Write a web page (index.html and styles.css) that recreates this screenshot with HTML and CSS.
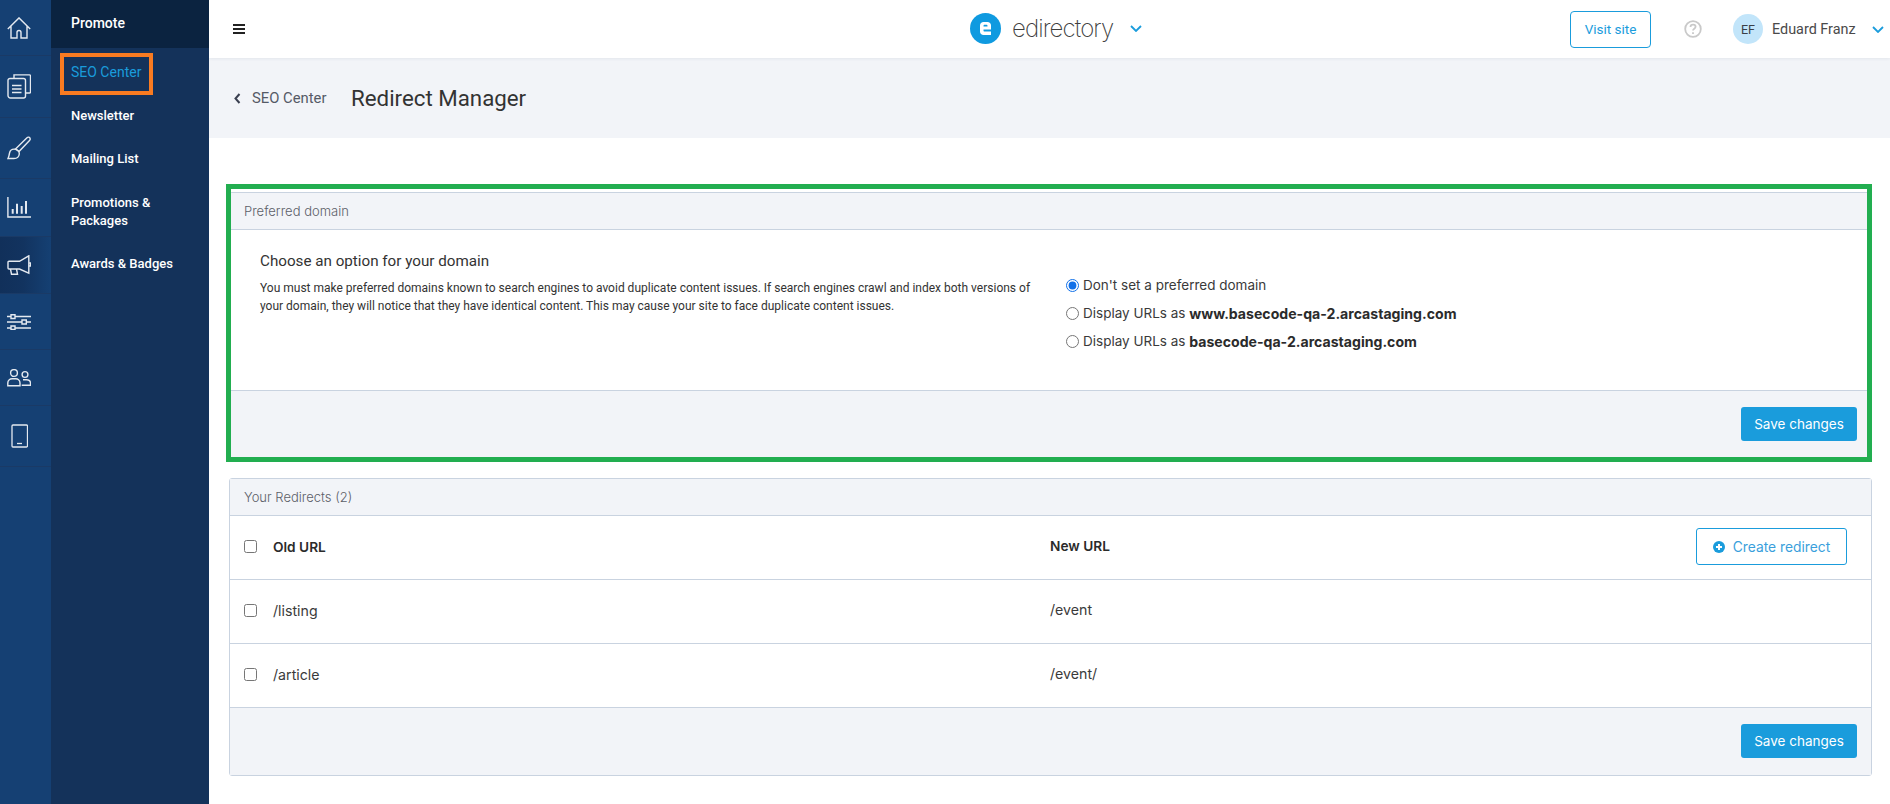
FILE: index.html
```html
<!DOCTYPE html>
<html lang="en">
<head>
<meta charset="utf-8">
<title>Redirect Manager</title>
<link rel="stylesheet" href="styles.css">
</head>
<body>
<div class="app">
  <nav class="rail">
    <a class="rail-item"><svg class="ico" viewBox="0 0 24 22"><path d="M.8 12 12 .9 23.200 12M4 9v12h6v-5.500a2 2 0 0 1 4 0V21h6V9"/></svg></a>
    <a class="rail-item"><svg class="ico" viewBox="0 0 24 25"><path d="M7 4V.9h15.500a1 1 0 0 1 1 1V18a1 1 0 0 1-1 1H19"/><path d="M3 4.500h13.500a2 2 0 0 1 2 2V22a2 2 0 0 1-2 2H3.500a2.500 2.500 0 0 1-2.500-2.500V6.500a2 2 0 0 1 2-2z"/><path class="thin" d="M5 11.500h9.500M5 15h9.500M5 18.500h9.500"/></svg></a>
    <a class="rail-item"><svg class="ico" viewBox="0 0 24 24"><path d="M8.500 13 20 1.700c1-.9 2.300-.6 2.900.3.500.8.300 1.800-.4 2.500L12 15.500z"/><path d="M8 13.200c-3-.3-5 1.200-5.500 4-.3 2-.7 3.800-1.500 5.300h6c3 0 5-2 5.300-4.500.1-2-1.300-4.500-4.300-4.800z"/></svg></a>
    <a class="rail-item"><svg class="ico" viewBox="0 0 24 21"><path d="M.9 0v20h23.100"/><path class="thick" d="M5.700 12v4.800M10 6.700v10.100M14.700 9v7.800M19 4v12.800"/></svg></a>
    <a class="rail-item active"><svg class="ico" viewBox="0 0 24 20"><path d="M2 6.300h10.500L21.800.8v17.400l-9.300-4.200H2a1 1 0 0 1-1-1V7.300a1 1 0 0 1 1-1z"/><path d="M22 8h1.300v3H22"/><path d="M3.500 14l1 5.200h6l-1-5.200"/></svg></a>
    <a class="rail-item"><svg class="ico" viewBox="0 0 24 16"><path d="M0 2.500h24M0 8h24M0 14h24"/><path class="box" d="M4 .8h4v3.700H4zM15 6h4.300v4H15zM4 12h4v3.500H4z"/></svg></a>
    <a class="rail-item"><svg class="ico" viewBox="0 0 24 18"><circle cx="7" cy="4" r="3.400"/><path d="M.8 16.800V14c0-2.400 2-4.200 4.300-4.200h3.600c2.400 0 4.300 1.800 4.300 4.200v2.800z"/><circle cx="18" cy="5.500" r="2.900"/><path d="M16 10.800h3.500c2.300 0 4 1.400 4 3.400v2.100h-8.800"/></svg></a>
    <a class="rail-item phone"><svg class="ico-phone" viewBox="0 0 17 24"><rect x="1" y="1" width="15.500" height="22" rx="1"/><path d="M6 19.500h5"/></svg></a>
  </nav>

  <aside class="subnav">
    <div class="subnav-head">Promote</div>
    <ul class="subnav-list">
      <li class="subnav-item current"><a>SEO Center</a><span class="mark-orange"></span></li>
      <li class="subnav-item"><a>Newsletter</a></li>
      <li class="subnav-item"><a>Mailing List</a></li>
      <li class="subnav-item"><a>Promotions &amp;<br>Packages</a></li>
      <li class="subnav-item"><a>Awards &amp; Badges</a></li>
    </ul>
  </aside>

  <div class="main">
    <header class="topbar">
      <button class="burger" aria-label="Menu"><i></i><i></i><i></i></button>
      <div class="brand">
        <svg class="brand-logo" viewBox="0 0 31 31"><circle cx="15.500" cy="15.500" r="15.500" fill="#0f9ae0"/><path d="M10 12.500c0-2 1.500-3.500 3.500-3.500h4c2 0 3.500 1.500 3.500 3.500V16.500H13.500V17.500c0 .6.400 1 1 1H21V22h-7.500c-2 0-3.500-1.500-3.500-3.500zM13.500 13.500h4v-.8c0-.5-.4-.9-.9-.9h-2.200c-.5 0-.9.400-.9.900z" fill="#fff"/></svg>
        <span class="brand-name">edirectory</span>
        <svg class="chev" viewBox="0 0 12 7"><path d="M1 1l5 5 5-5"/></svg>
      </div>
      <div class="top-right">
        <a class="btn-visit">Visit site</a>
        <svg class="help" viewBox="0 0 18 18"><circle cx="9" cy="9" r="7.800"/><path d="M6.500 7c0-1.500 1.200-2.300 2.600-2.300s2.500.9 2.500 2.100c0 1.900-2.600 1.800-2.600 3.600"/><path d="M9 12.300v1.600"/></svg>
        <span class="avatar">EF</span>
        <span class="user-name">Eduard Franz</span>
        <svg class="chev" viewBox="0 0 12 7"><path d="M1 1l5 5 5-5"/></svg>
      </div>
    </header>

    <section class="page-head">
      <a class="back"><svg class="back-ico" viewBox="0 0 7 11"><path d="M5.500 1 1.500 5.500l4 4.500"/></svg>SEO Center</a>
      <h1>Redirect Manager</h1>
    </section>

    <div class="content">
      <section class="panel first">
        <span class="mark-green"></span>
        <div class="panel-head">Preferred domain</div>
        <div class="panel-body domain">
          <div class="domain-text">
            <h2>Choose an option for your domain</h2>
            <p>You must make preferred domains known to search engines to avoid duplicate content issues. If search engines crawl and index both versions of your domain, they will notice that they have identical content. This may cause your site to face duplicate content issues.</p>
          </div>
          <div class="domain-options">
            <label class="opt"><input type="radio" name="d" checked>Don't set a preferred domain</label>
            <label class="opt"><input type="radio" name="d">Display URLs as&nbsp;<b>www.basecode-qa-2.arcastaging.com</b></label>
            <label class="opt"><input type="radio" name="d">Display URLs as&nbsp;<b>basecode-qa-2.arcastaging.com</b></label>
          </div>
        </div>
        <div class="panel-foot"><button class="btn-save">Save changes</button></div>
      </section>

      <section class="panel">
        <div class="panel-head">Your Redirects (2)</div>
        <div class="row row-head">
          <span class="cell-old"><input type="checkbox"><b>Old URL</b></span>
          <b class="cell-new up">New URL</b>
          <a class="btn-create"><svg class="plus" viewBox="0 0 12 12"><circle cx="6" cy="6" r="6" fill="#1a9cdc"/><path d="M6 3v6M3 6h6" stroke="#fff" stroke-width="2"/></svg>Create redirect</a>
        </div>
        <div class="row">
          <span class="cell-old"><input type="checkbox">/listing</span>
          <span class="cell-new up">/event</span>
        </div>
        <div class="row">
          <span class="cell-old"><input type="checkbox">/article</span>
          <span class="cell-new up">/event/</span>
        </div>
        <div class="panel-foot"><button class="btn-save">Save changes</button></div>
      </section>
    </div>
  </div>
</div>
</body>
</html>
```

FILE: styles.css
```css
* { box-sizing: border-box; }
html, body { margin: 0; height: 100%; background: #fff; overflow: hidden; }
body { font-family: Roboto, "Liberation Sans", sans-serif; color: #333; }
a { text-decoration: none; }

.app { display: flex; height: 804px; }

/* icon rail */
.rail {
  width: 51px; flex: none; background: #154073;
  display: grid; grid-template-rows: 56px 62px 61px 58px 57px 56px 56px 61px;
  align-content: start;
}
.rail-item {
  display: flex; align-items: center; padding-left: 7px;
  border-bottom: 1px solid #1a3a66;
}
.rail-item.active { background: linear-gradient(90deg, #11305a 0%, #12335f 45%, #154073 100%); }
.rail-item.phone { padding-left: 11px; }
.ico { width: 24px; height: auto; fill: none; stroke: #e4e9f0; stroke-width: 1.400; }
.ico .thin { stroke-width: 1.300; }
.ico .thick { stroke-width: 2; }
.ico .box { fill: #154073; }
.ico-phone { width: 17px; height: 24px; fill: none; stroke: #e4e9f0; stroke-width: 1.300; }

/* second column */
.subnav { width: 158px; flex: none; background: #14325a; color: #fff; }
.subnav-head {
  height: 48px; background: #0b2340; padding: 0 0 3px 20px;
  display: flex; align-items: center;
  font-size: 14px; font-weight: 500; color: #fff;
}
.subnav-list { list-style: none; margin: 0; padding: 2px 0 0; }
.subnav-item {
  position: relative; padding: 13px 12px 12.500px 20px;
  font-size: 13px; line-height: 18px; font-weight: 500; color: #fff;
}
.subnav-item.current { color: #1a9cdc; font-weight: 400; font-size: 14px; }
.mark-orange {
  position: absolute; left: 9px; top: 3px; width: 93px; height: 42px;
  border: 4px solid #f97b21;
}

/* main */
.main { flex: 1; min-width: 0; display: flex; flex-direction: column; }

.topbar {
  height: 58px; flex: none; background: #fff; position: relative;
  display: flex; align-items: center; padding: 0 6px 0 24px;
  box-shadow: 0 1px 3px rgba(30, 50, 90, .07);
}
.burger {
  width: 12px; height: 10px; padding: 0; border: 0; background: none;
  display: flex; flex-direction: column; justify-content: space-between; margin-top: 0;
}
.burger i { display: block; height: 2px; background: #222; }

.brand {
  position: absolute; left: 761px; top: 13px;
  display: flex; align-items: center;
}
.brand-logo { width: 31px; height: 31px; }
.brand-name {
  margin-left: 11px; font-family: Inter, Lato, sans-serif; font-weight: 200;
  font-size: 24px; line-height: 30px; color: #3f3f3f; letter-spacing: -.9px; width: 107px;
}
.brand .chev { margin-left: 11px; }
.chev { width: 12px; height: 7px; fill: none; stroke: #1a9cdc; stroke-width: 1.800; }

.top-right { margin-left: auto; display: flex; align-items: center; }
.btn-visit {
  width: 81px; height: 37px; border: 1px solid #1a9cdc; border-radius: 4px;
  display: flex; align-items: center; justify-content: center;
  color: #1a9cdc; font-size: 13.500px;
}
.help { width: 18px; height: 18px; margin-left: 33px; fill: none; stroke: #c9c9c9; stroke-width: 1.800; }
.avatar {
  width: 30px; height: 30px; border-radius: 50%; background: #c2e5fa;
  margin-left: 31px; display: flex; align-items: center; justify-content: center;
  font-size: 12.500px; color: #3a3f47;
}
.user-name { margin-left: 9px; font-size: 14.400px; color: #4a4a4a; width: 100px; }

.page-head {
  height: 80px; flex: none; background: #f2f4f8;
  display: flex; align-items: center; padding: 0 0 0 25px;
}
.back { display: flex; align-items: center; font-size: 14.800px; color: #555a66; width: 117px; }
.back-ico { width: 7px; height: 11px; margin-right: 11px; fill: none; stroke: #3a3f50; stroke-width: 2; }
.page-head h1 { margin: 0; font-size: 22.300px; font-weight: 400; color: #333; }

.content { padding: 54px 18px 0 20px; display: flex; flex-direction: column; gap: 20px; }

.panel {
  position: relative; border: 1px solid #c9d3e0; border-radius: 3px; background: #fff;
  font-family: "Noto Sans", Roboto, sans-serif;
}
.panel.first { height: 266px; display: flex; flex-direction: column; }
.mark-green {
  position: absolute; left: -4px; right: -1px; top: -9px; bottom: -5px;
  border: 5px solid #22ae50; pointer-events: none;
}
.panel-head {
  height: 37px; background: #f2f4f8; border-bottom: 1px solid #c9d3e0;
  display: flex; align-items: center; padding: 0 0 0 14px;
  font-family: Inter, Roboto, sans-serif; font-size: 13px; font-weight: 300; color: #5c6068;
}
.panel-body.domain { flex: 1; display: flex; padding: 21px 0 0 30px; }
.domain-text { width: 806px; flex: none; }
.domain-text h2 {
  margin: 0 0 8px; font-family: Roboto, sans-serif; font-size: 15.200px; line-height: 20px; font-weight: 400; color: #333;
}
.domain-text p {
  margin: 0; max-width: 780px; font-family: Roboto, sans-serif; font-size: 12px; line-height: 18px; color: #333;
}
.domain-options { padding-top: 24px; display: flex; flex-direction: column; gap: 8px; }
.opt {
  display: flex; align-items: center; height: 20px;
  font-family: Inter, Roboto, sans-serif; font-size: 13.500px; color: #3a3a3a;
}
.opt b { font-weight: 700; font-size: 14.100px; color: #2b2b2b; }
.opt input { width: 13px; height: 13px; margin: 0 4px 0 0; accent-color: #1170e8; }

.panel-foot {
  height: 67px; margin-top: auto; background: #f2f4f8; border-top: 1px solid #c9d3e0;
  display: flex; align-items: flex-start; justify-content: flex-end; padding: 16px 14px 0 0;
}
.btn-save {
  width: 116px; height: 34px; border: 0; border-radius: 3px; background: #1a9cdc; color: #fff;
  font-family: Inter, Roboto, sans-serif; font-size: 13.500px;
}

.row {
  height: 64px; border-bottom: 1px solid #c9d3e0;
  display: flex; align-items: center; padding: 0 24px 2px 14px;
  font-family: Inter, Roboto, sans-serif; font-size: 14.200px; color: #3a3a3a;
}
.row-head { font-size: 13.700px; }
.row-head b { font-weight: 600; color: #2b2b2b; }
.row + .panel-foot { border-top: 0; }
.cell-old { width: 806px; flex: none; display: flex; align-items: center; }
.cell-old input { width: 13px; height: 13px; margin: 0 16px 0 0; accent-color: #1170e8; }
.cell-new { flex: 1; }
.cell-new.up { margin-top: -2px; }
.btn-create {
  width: 151px; height: 37px; border: 1px solid #1a9cdc; border-radius: 3px;
  display: flex; align-items: center; justify-content: center;
  color: #3a9fdc; font-size: 13.800px; font-weight: 400;
}
.plus { width: 12px; height: 12px; margin-right: 8px; }
```
